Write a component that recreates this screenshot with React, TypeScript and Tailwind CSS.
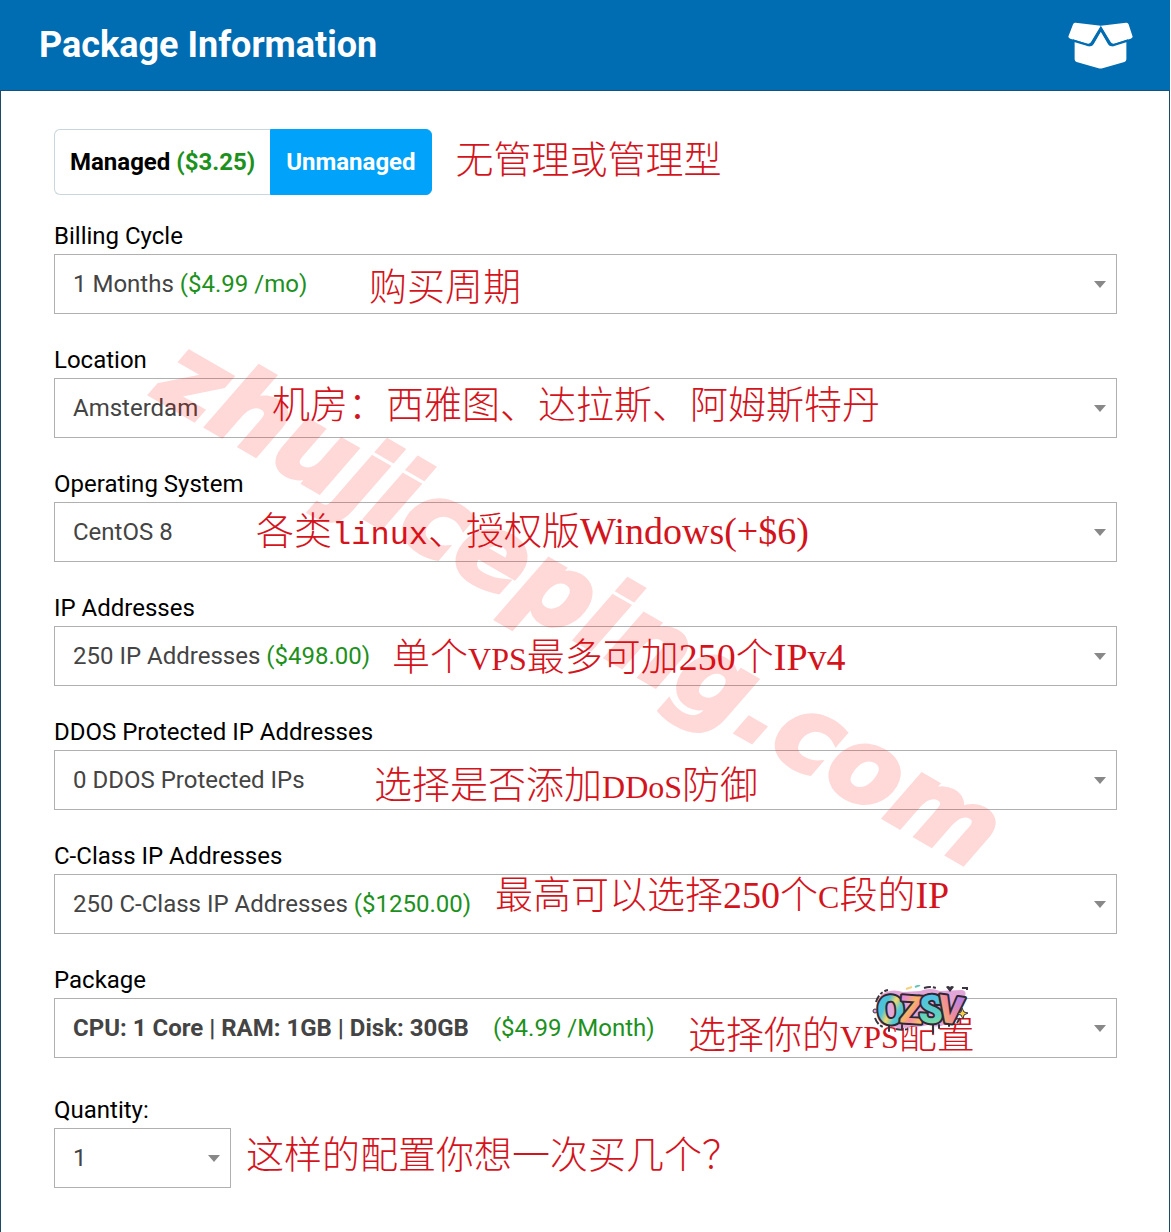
import { useState } from 'react';
import type { ReactNode } from 'react';

type Option = {
  label: string;
  price?: string;
};

type SelectBoxProps = {
  id: string;
  options: Option[];
  bold?: boolean;
};

function SelectBox({ id, options, bold }: SelectBoxProps) {
  const [value, setValue] = useState(options[0].label);
  const selected = options.find((o) => o.label === value) ?? options[0];
  const weight = bold ? 'font-bold' : 'font-normal';

  return (
    <div className="relative h-[60px]">
      <select
        id={id}
        value={value}
        onChange={(e) => setValue(e.target.value)}
        className={`h-full w-full appearance-none border border-[#b0b0b0] bg-white pl-[18px] pr-10 text-[#444] focus:outline-none ${weight}`}
      >
        {options.map((o) => (
          <option key={o.label} value={o.label}>
            {o.label}
          </option>
        ))}
      </select>

      {/* the hidden label pushes the price to the end of the selected text */}
      {selected.price && (
        <div className="pointer-events-none absolute inset-0 flex items-center pl-[19px]">
          <span aria-hidden="true" className={`invisible whitespace-pre ${weight}`}>
            {selected.label}
          </span>
          <span className={bold ? 'ml-6 text-[#1c911c]' : 'ml-1.5 text-[#1c911c]'}>{selected.price}</span>
        </div>
      )}

      <svg
        viewBox="0 0 12 7"
        className="pointer-events-none absolute right-[11px] top-[27px] h-[7px] w-3 fill-[#888]"
        aria-hidden="true"
      >
        <path d="M0 0h12L6 7z" />
      </svg>
    </div>
  );
}

function Note({ children, className = '' }: { children: ReactNode; className?: string }) {
  return (
    <span
      className={`pointer-events-none whitespace-nowrap font-['Noto_Sans_CJK_SC',sans-serif] text-[38px] font-light leading-[44px] text-[#d4141c] ${className}`}
    >
      {children}
    </span>
  );
}

function Latin({ children }: { children: string }) {
  return <span className="font-['Liberation_Serif',serif]">{children}</span>;
}

function Caps({ children }: { children: string }) {
  return <span className="font-['Liberation_Serif',serif] text-[32px]">{children}</span>;
}

function Mono({ children }: { children: string }) {
  return <span className="font-['Liberation_Mono',monospace] text-[32px]">{children}</span>;
}

type FieldProps = SelectBoxProps & {
  title: string;
  children?: ReactNode;
};

function Field({ title, children, ...box }: FieldProps) {
  return (
    <div className="mb-7">
      <label htmlFor={box.id} className="block h-9 leading-9 text-black">
        {title}
      </label>
      <div className="relative">
        <SelectBox {...box} />
        {children}
      </div>
    </div>
  );
}

function BoxIcon() {
  return (
    <svg viewBox="84 69 196 141" className="h-[47px] w-[65px] fill-white" aria-hidden="true">
      <path d="M104 127 L146 141 Q156 144 161 136 L183 98 L205 136 Q210 144 220 141 L260 127 V181 Q260 187 254 189 L188 208 Q182 210 176 208 L110 189 Q104 187 104 181Z" />
      <path d="M107 71 L183 80 L153 130 Q149 136 142 134 L91 119 Q83 116 86 110 L99 76 Q101 70 107 71Z" />
      <path d="M259 71 L183 80 L213 130 Q217 136 224 134 L273 119 Q281 116 278 110 L267 76 Q265 70 259 71Z" />
      <path
        d="M98 124 L144 138 Q152 140 157 133 L183 89 L209 133 Q214 140 222 138 L266 124"
        className="fill-none stroke-[#006db3] stroke-[7]"
        strokeLinejoin="round"
      />
    </svg>
  );
}

const LETTERS = [
  { char: 'O', x: 5, y: 39, size: 40, fill: 'url(#teal)', turn: 'rotate(-4 19 25)' },
  { char: 'Z', x: 28, y: 38, size: 38, fill: 'url(#peach)', turn: 'rotate(4 40 25)' },
  { char: 'S', x: 47, y: 38, size: 39, fill: 'url(#mint)', turn: 'rotate(3 60 25)' },
  { char: 'V', x: 66, y: 38, size: 38, fill: 'url(#sunset)', turn: 'rotate(8 78 25)' },
];

function Sticker() {
  return (
    <svg viewBox="0 0 98 50" className="pointer-events-none absolute right-[147px] top-[-13px] h-[50px] w-[98px]" role="img" aria-label="OZSV">
      <defs>
        <linearGradient id="teal" x1="0" y1="0" x2="1" y2="1">
          <stop offset="0.35" stopColor="#4cc3d9" />
          <stop offset="0.5" stopColor="#f5d76a" />
          <stop offset="0.65" stopColor="#56c9d6" />
          <stop offset="1" stopColor="#3fa9dc" />
        </linearGradient>
        <linearGradient id="peach" x1="0" y1="0" x2="1" y2="1">
          <stop offset="0.2" stopColor="#e88bd0" />
          <stop offset="0.45" stopColor="#f7b562" />
          <stop offset="0.6" stopColor="#f68fa0" />
          <stop offset="0.9" stopColor="#fbcf5b" />
        </linearGradient>
        <linearGradient id="mint" x1="0" y1="0" x2="0" y2="1">
          <stop offset="0.2" stopColor="#50bfe6" />
          <stop offset="0.6" stopColor="#5ed0c0" />
          <stop offset="0.9" stopColor="#8bdc93" />
        </linearGradient>
        <linearGradient id="sunset" x1="0" y1="1" x2="1" y2="0">
          <stop offset="0.2" stopColor="#f9b95c" />
          <stop offset="0.5" stopColor="#f08a9d" />
          <stop offset="0.8" stopColor="#b983e6" />
        </linearGradient>
      </defs>
      <path
        d="M10 9 Q20 3 31 7 L48 6 Q58 2 68 6 L90 5 Q95 6 93 11 L86 30 Q83 39 75 38 Q67 44 56 40 Q46 43 40 41 Q30 45 22 42 Q10 43 6 34 Q1 19 10 9Z"
        className="fill-[#e3a6d8]"
      />
      <path
        d="M4 17 Q7 7 16 5 M3 33 Q5 39 11 42 M52 3 Q58 1 64 3 M90 3h5v4 M88 33l-3 5 M24 44 Q32 46 38 43"
        className="fill-none stroke-[#3a3340] stroke-[2]"
        strokeDasharray="7 2 3 2"
      />
      <path d="M17 40v6 M30 40v4 M61 40v8 M67 40v3 M77 36v5" className="fill-none stroke-[#3a3340] stroke-[2]" strokeLinecap="round" />
      {LETTERS.map((l) => (
        <text
          key={l.char}
          x={l.x}
          y={l.y}
          fontSize={l.size}
          fill={l.fill}
          transform={l.turn}
          paintOrder="stroke"
          strokeLinejoin="round"
          className="stroke-[#2d2833] stroke-[4] font-['Roboto',sans-serif] font-black"
        >
          {l.char}
        </text>
      ))}
      <path d="M34 4l6-2" className="stroke-[#f2d27c] stroke-[2]" />
      <path d="M43 2l5-2" className="stroke-[#62c7b8] stroke-[2]" />
      <path d="M74 2q2-2 4 0q2-2 4 0l-4 5z" className="fill-[#3a3340]" />
      <circle cx="3" cy="26" r="2" className="fill-[#e3a6d8] stroke-[#3a3340]" />
      <path d="M90 23l2 4 4 1-4 2-1 4-2-4-4-1 4-2z" className="fill-[#f7cf45] stroke-[#3a3340]" />
    </svg>
  );
}

export default function App() {
  const [managed, setManaged] = useState(false);
  const active = 'border-[#00a2fa] bg-[#00a2fa] text-white';
  const idle = 'border-[#c9d6dd] bg-white text-black';

  return (
    <div className="relative mr-px flex min-h-screen flex-col overflow-hidden bg-white font-['Roboto',sans-serif] text-[24px]">
      <header className="flex h-[91px] items-center justify-between border-b border-[#17507a] bg-[#006db3] pl-[39px] pr-[37px]">
        <h1 className="text-[36px] font-bold leading-none text-white">Package Information</h1>
        <BoxIcon />
      </header>

      <main className="flex-1 border-x border-[#1d4a66] pb-11 pl-[53px] pr-[52px] pt-[38px]">
        <div className="mb-[23px] flex">
          <div className="flex h-[66px] font-bold">
            <button
              type="button"
              aria-pressed={managed}
              onClick={() => setManaged(true)}
              className={`rounded-l-md border border-r-0 px-[15px] ${managed ? active : idle}`}
            >
              Managed <span className="text-[#1c911c]">($3.25)</span>
            </button>
            <button
              type="button"
              aria-pressed={!managed}
              onClick={() => setManaged(false)}
              className={`rounded-r-md border px-[15px] ${managed ? idle : active}`}
            >
              Unmanaged
            </button>
          </div>
          <Note className="ml-6 mt-1.5">无管理或管理型</Note>
        </div>

        <Field id="billing" title="Billing Cycle" options={[{ label: '1 Months', price: '($4.99 /mo)' }]}>
          <Note className="absolute left-[315px] top-2">购买周期</Note>
        </Field>

        <Field id="location" title="Location" options={[{ label: 'Amsterdam' }, { label: 'Seattle' }, { label: 'Dallas' }]}>
          <Note className="absolute left-[218px] top-0.5">机房：西雅图、达拉斯、阿姆斯特丹</Note>
        </Field>

        <Field id="os" title="Operating System" options={[{ label: 'CentOS 8' }]}>
          <Note className="absolute left-[202px] top-1">
            各类<Mono>linux</Mono>、授权版<Latin>Windows(+$6)</Latin>
          </Note>
        </Field>

        <Field id="ips" title="IP Addresses" options={[{ label: '250 IP Addresses', price: '($498.00)' }]}>
          <Note className="absolute left-[338px] top-1.5">
            单个<Caps>VPS</Caps>最多可加<Latin>250</Latin>个<Latin>IPv4</Latin>
          </Note>
        </Field>

        <Field id="ddos" title="DDOS Protected IP Addresses" options={[{ label: '0 DDOS Protected IPs' }]}>
          <Note className="absolute left-80 top-2.5">
            选择是否添加<Caps>DDoS</Caps>防御
          </Note>
        </Field>

        <Field id="cclass" title="C-Class IP Addresses" options={[{ label: '250 C-Class IP Addresses', price: '($1250.00)' }]}>
          <Note className="absolute left-[441px] -top-1">
            最高可以选择<Latin>250</Latin>个<Caps>C</Caps>段的<Latin>IP</Latin>
          </Note>
        </Field>

        <Field
          id="package"
          title="Package"
          bold
          options={[{ label: 'CPU: 1 Core | RAM: 1GB | Disk: 30GB', price: '($4.99 /Month)' }]}
        >
          <Note className="absolute left-[634px] top-3">
            选择你的<Caps>VPS</Caps>配置
          </Note>
          <Sticker />
        </Field>

        <div className="mt-[34px]">
          <label htmlFor="quantity" className="block h-9 leading-9 text-black">
            Quantity:
          </label>
          <div className="flex">
            <div className="w-[177px]">
              <SelectBox id="quantity" options={[{ label: '1' }, { label: '2' }, { label: '3' }]} />
            </div>
            <Note className="ml-[15px] mt-0.5">这样的配置你想一次买几个？</Note>
          </div>
        </div>
      </main>

      <div
        aria-hidden="true"
        className="pointer-events-none absolute left-[195px] top-[319px] origin-top-left rotate-30 whitespace-nowrap font-['DejaVu_Sans',sans-serif] text-[104px] font-bold italic leading-none text-[#ff0000] opacity-15 [-webkit-text-stroke:4px_#ff0000]"
      >
        zhujiceping.com
      </div>
    </div>
  );
}
